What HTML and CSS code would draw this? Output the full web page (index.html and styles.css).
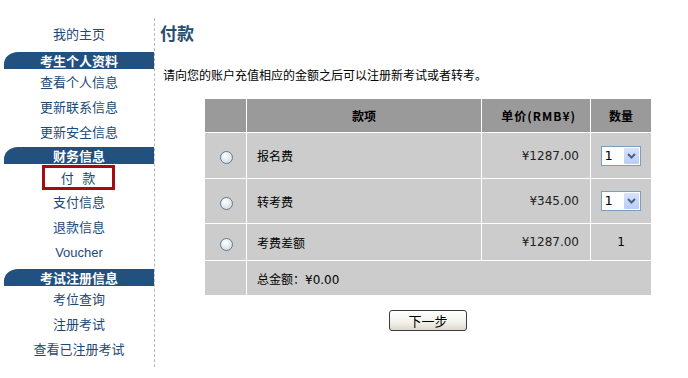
FILE: index.html
```html
<!DOCTYPE html>
<html lang="zh-CN">
<head>
<meta charset="utf-8">
<title>付款</title>
<link rel="stylesheet" href="styles.css">
</head>
<body>
<div class="page">
  <nav class="sidebar">
    <a class="nav-item" href="#">我的主页</a>
    <div class="nav-head">考生个人资料</div>
    <a class="nav-item" href="#">查看个人信息</a>
    <a class="nav-item" href="#">更新联系信息</a>
    <a class="nav-item" href="#">更新安全信息</a>
    <div class="nav-head nav-head-2">财务信息</div>
    <div class="nav-item nav-active"><span class="active-box">付&nbsp;&nbsp;&nbsp;款</span></div>
    <a class="nav-item" href="#">支付信息</a>
    <a class="nav-item" href="#">退款信息</a>
    <a class="nav-item latin" href="#">Voucher</a>
    <div class="nav-head nav-head-3">考试注册信息</div>
    <a class="nav-item" href="#">考位查询</a>
    <a class="nav-item" href="#">注册考试</a>
    <a class="nav-item" href="#">查看已注册考试</a>
  </nav>
  <main class="main">
    <h1 class="title">付款</h1>
    <p class="intro">请向您的账户充值相应的金额之后可以注册新考试或者转考。</p>
    <div class="pay-block">
      <table class="pay-table">
        <thead>
          <tr class="row-head">
            <th class="c-radio"></th>
            <th class="c-name">款项</th>
            <th class="c-price">单价(RMB¥)</th>
            <th class="c-qty">数量</th>
          </tr>
        </thead>
        <tbody>
          <tr class="row-sel">
            <td class="c-radio"><span class="radio"></span></td>
            <td class="c-name">报名费</td>
            <td class="c-price num">¥1287.00</td>
            <td class="c-qty"><span class="select"><span class="select-val">1</span><span class="select-btn"><svg width="9" height="6" viewBox="0 0 9 6"><path d="M1 1 L4.5 4.5 L8 1" fill="none" stroke="#4d6185" stroke-width="2"/></svg></span></span></td>
          </tr>
          <tr class="row-sel row-sel-2">
            <td class="c-radio"><span class="radio"></span></td>
            <td class="c-name">转考费</td>
            <td class="c-price num">¥345.00</td>
            <td class="c-qty"><span class="select"><span class="select-val">1</span><span class="select-btn"><svg width="9" height="6" viewBox="0 0 9 6"><path d="M1 1 L4.5 4.5 L8 1" fill="none" stroke="#4d6185" stroke-width="2"/></svg></span></span></td>
          </tr>
          <tr class="row-plain">
            <td class="c-radio"><span class="radio"></span></td>
            <td class="c-name">考费差额</td>
            <td class="c-price num">¥1287.00</td>
            <td class="c-qty num">1</td>
          </tr>
          <tr class="row-total">
            <td class="c-radio"></td>
            <td class="c-name" colspan="3">总金额：<span class="num">¥0.00</span></td>
          </tr>
        </tbody>
      </table>
      <div class="actions"><button class="btn" type="button">下一步</button></div>
    </div>
  </main>
</div>
</body>
</html>
```

FILE: styles.css
```css
html, body {
  margin: 0;
  padding: 0;
  background: #ffffff;
}
body {
  font-family: "Noto Sans CJK SC", "DejaVu Sans", sans-serif;
  color: #000;
}
.page {
  display: flex;
  align-items: flex-start;
  padding: 18px 0 0 4px;
}
.sidebar {
  width: 150px;
  border-right: 1px dashed #b8b8b8;
  padding: 3px 0 6px;
  display: flex;
  flex-direction: column;
}
.nav-item {
  display: block;
  height: 25px;
  line-height: 25px;
  text-align: center;
  font-size: 13px;
  color: #1c4a78;
  text-decoration: none;
}
.nav-item.latin {
  font-family: "Liberation Sans", sans-serif;
  font-size: 13px;
  line-height: 28px;
}
.nav-head {
  margin-top: 6px;
  height: 17px;
  line-height: 17px;
  background: #22507f;
  color: #fff;
  font-weight: bold;
  font-size: 13px;
  text-align: center;
  border-top-left-radius: 14px 12px;
}
.nav-head-2 { margin-top: 3px; }
.nav-head-3 { margin-top: 5px; }
.nav-active {
  display: flex;
  justify-content: center;
  align-items: center;
}
.active-box {
  box-sizing: border-box;
  width: 73px;
  height: 25px;
  line-height: 19px;
  border: 3px solid #a40d0d;
  background: #fff;
  color: #1c4a78;
  font-size: 13px;
  margin-left: -2px;
  margin-top: 2px;
}
.main {
  flex: 1;
  padding-left: 5px;
}
.title {
  margin: 0;
  height: 30px;
  line-height: 30px;
  font-size: 17px;
  font-weight: bold;
  color: #2a4f6e;
}
.intro {
  margin: 18px 0 0 3px;
  height: 18px;
  line-height: 18px;
  font-size: 12px;
}
.pay-block {
  width: 448px;
  margin: 14px 0 0 44px;
  display: flex;
  flex-direction: column;
}
.pay-table {
  width: 448px;
  border-collapse: separate;
  border-spacing: 1px;
  background: #fff;
  font-size: 12px;
  table-layout: fixed;
}
.pay-table th,
.pay-table td {
  padding: 0;
  box-sizing: border-box;
}
.pay-table th {
  background: #9a9a9a;
  font-weight: bold;
  height: 33px;
  text-align: center;
}
.pay-table td {
  background: #cccccc;
}
.c-radio { width: 41px; text-align: center; }
.c-name { width: 234px; }
.c-price { width: 108px; }
.c-qty { width: 60px; text-align: center; }
.pay-table td.c-name { padding-left: 10px; }
.pay-table td.c-price { text-align: right; padding-right: 11px; color: #222; }
.pay-table td.c-qty { text-align: center; }
.pay-table th.c-price { text-align: right; padding-right: 14px; letter-spacing: 1px; }
.row-sel td { height: 45px; }
.row-sel-2 td { height: 44px; }
.row-plain td { height: 36px; }
.row-total td { height: 34px; }
.num {
  font-family: "DejaVu Sans", sans-serif;
  font-size: 12px;
}
.radio {
  display: inline-block;
  box-sizing: border-box;
  width: 13px;
  height: 13px;
  border-radius: 50%;
  border: 1px solid #5f7b91;
  background: radial-gradient(circle at 40% 35%, #ffffff 0%, #e2e7ea 55%, #c3ccd3 100%);
  vertical-align: middle;
  margin-left: 2px;
}
.select {
  display: inline-flex;
  align-items: stretch;
  box-sizing: border-box;
  width: 40px;
  height: 20px;
  border: 1px solid #7f9db9;
  background: #fff;
  vertical-align: middle;
  margin-left: -1px;
}
.select-val {
  flex: 1;
  text-align: left;
  padding-left: 3px;
  line-height: 18px;
  font-family: "DejaVu Sans", sans-serif;
  font-size: 13px;
}
.select-btn {
  width: 15px;
  margin: 1px;
  display: flex;
  align-items: center;
  justify-content: center;
  background: linear-gradient(#d7e3fc, #b9cdf6);
  border-radius: 1px;
}
.actions {
  display: flex;
  justify-content: center;
  margin-top: 14px;
}
.btn {
  box-sizing: border-box;
  width: 78px;
  height: 21px;
  padding: 0;
  border: 1px solid #3c3c3c;
  border-radius: 3px;
  background: linear-gradient(#ffffff, #f2f1ea 60%, #dcd9cc);
  font-family: "Noto Sans CJK SC", sans-serif;
  font-size: 13px;
  line-height: 19px;
  color: #000;
}
```
